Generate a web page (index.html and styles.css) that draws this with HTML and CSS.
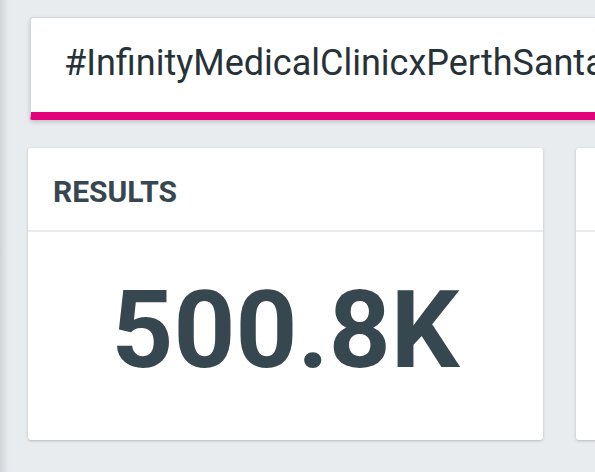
FILE: index.html
```html
<!DOCTYPE html>
<html>
<head>
<meta charset="utf-8">
<link rel="stylesheet" href="styles.css">
</head>
<body>
<div class="page">
  <div class="edge"></div>
  <main class="main">
    <div class="title-card">
      <h1 class="title">#InfinityMedicalClinicxPerthSanta</h1>
    </div>
    <div class="cards">
      <section class="card">
        <header class="card-head"><h2 class="card-title">RESULTS</h2></header>
        <div class="card-body"><div class="metric">500.8K</div></div>
      </section>
      <section class="card">
        <header class="card-head"><div class="card-title-space"></div></header>
        <div class="card-body"><div class="metric-space"></div></div>
      </section>
    </div>
  </main>
</div>
</body>
</html>
```

FILE: styles.css
```css
html, body {
  margin: 0;
  padding: 0;
  height: 100%;
  overflow: hidden;
  background: #e9ecef;
  font-family: Roboto, "Liberation Sans", sans-serif;
}
.page {
  display: flex;
  height: 472px;
}
.edge {
  flex: 0 0 9px;
  background: linear-gradient(to right, #cfd4d8, #dfe3e6 60%, #e9ecef);
}
.main {
  flex: 0 0 auto;
  padding: 17px 0 0 19px;
}
.title-card {
  margin-left: 2px;
  width: 700px;
  background: #fff;
  border: 1px solid #d3d8dc;
  border-bottom: 8px solid #e2037c;
  border-radius: 3px 3px 2px 2px;
  box-shadow: 0 2px 4px rgba(0, 0, 0, 0.18);
  padding: 25px 0 29px 33px;
}
.title {
  margin: 0;
  font-size: 36px;
  line-height: 40px;
  font-weight: 400;
  color: #263238;
  white-space: nowrap;
}
.cards {
  display: grid;
  grid-template-columns: 515px 515px;
  gap: 33px;
  margin-top: 28px;
}
.card {
  background: #fff;
  border-radius: 3px;
  box-shadow: 0 1px 3px rgba(0, 0, 0, 0.22);
}
.card-head {
  padding: 27px 25px 21px;
  border-bottom: 2px solid #e8ebee;
}
.card-title {
  margin: 0;
  font-size: 30px;
  line-height: 34px;
  font-weight: 700;
  color: #37474f;
}
.card-title-space {
  height: 34px;
}
.card-body {
  padding: 44px 0 56px;
  text-align: center;
}
.metric {
  font-size: 108px;
  line-height: 108px;
  font-weight: 700;
  color: #37474f;
}
.metric-space {
  height: 108px;
}
```
